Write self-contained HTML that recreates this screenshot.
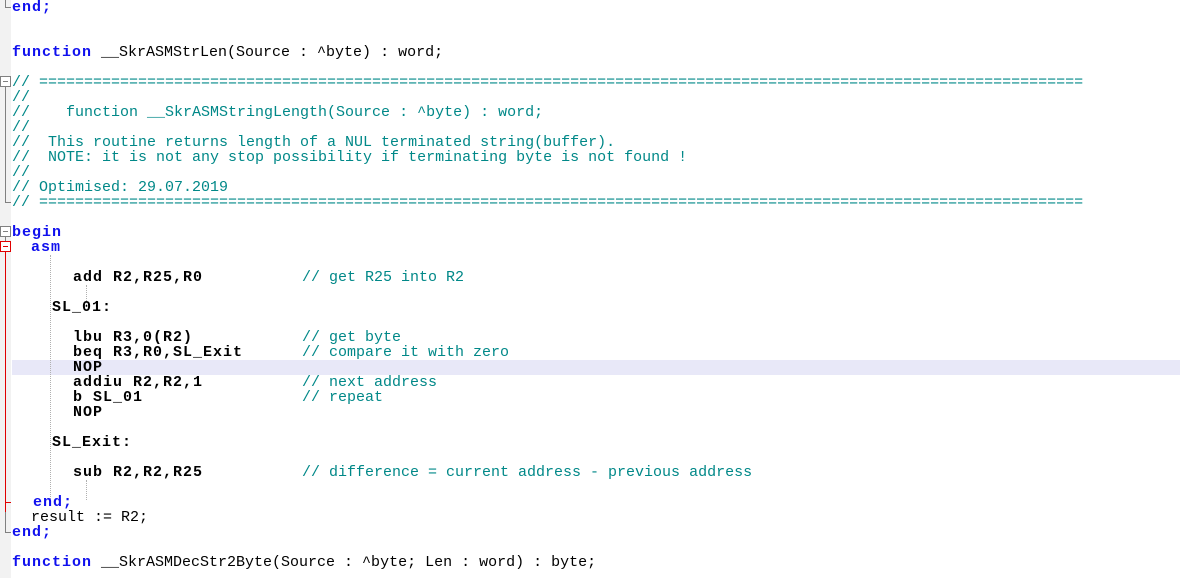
<!DOCTYPE html>
<html><head><meta charset="utf-8"><style>
html,body{margin:0;padding:0;background:#fff;width:1180px;height:578px;overflow:hidden;position:relative}
.gut{position:absolute;left:0;top:0;width:11px;height:578px;background:#f2f2f2}
.l{position:absolute;height:15px;line-height:15px;font-family:"Liberation Mono",monospace;font-size:15px;white-space:pre;color:#000}
.k{color:#1010ee;font-weight:bold;letter-spacing:1px}
.b{font-weight:bold;letter-spacing:1px}
.c{color:#008888}
.hl{position:absolute;left:12px;top:360px;width:1168px;height:15px;background:#e8e8f8}
.v{position:absolute;width:1px}
.h{position:absolute;height:1px}
.box{position:absolute;left:0px;width:9px;height:9px;border:1px solid #808080;background:#fff;z-index:3}
.box:after{content:"";position:absolute;left:2px;top:4px;width:5px;height:1px;background:#808080}
.box.r{border-color:#e00000}
.box.r:after{background:#e00000}
.dot{position:absolute;width:0;border-left:1px dotted #b0b0b0}
</style></head><body>
<div class="gut"></div>
<div class="hl"></div>
<div class="v" style="left:5px;top:0;height:7px;background:#808080"></div>
<div class="h" style="left:5px;top:7px;width:6px;background:#808080"></div>
<div class="box" style="top:76px"></div>
<div class="v" style="left:5px;top:87px;height:115px;background:#808080"></div>
<div class="h" style="left:5px;top:202px;width:6px;background:#808080"></div>
<div class="box" style="top:226px"></div>
<div class="v" style="left:5px;top:237px;height:296px;background:#808080"></div>
<div class="h" style="left:5px;top:532px;width:6px;background:#808080"></div>
<div class="box r" style="top:241px"></div>
<div class="v" style="left:5px;top:252px;height:260px;background:#e00000;z-index:2"></div>
<div class="h" style="left:5px;top:502px;width:6px;background:#e00000;z-index:2"></div>
<div class="dot" style="left:50px;top:255px;height:250px"></div>
<div class="dot" style="left:86px;top:285px;height:20px"></div>
<div class="dot" style="left:86px;top:480px;height:20px"></div>

<div class="l" style="left:12px;top:0"><span class="k">end;</span></div>
<div class="l" style="left:12px;top:45px"><span class="k">function</span> __SkrASMStrLen(Source : ^byte) : word;</div>
<div class="l c" style="left:12px;top:75px">// ====================================================================================================================</div>
<div class="l c" style="left:12px;top:90px">//</div>
<div class="l c" style="left:12px;top:105px">//    function __SkrASMStringLength(Source : ^byte) : word;</div>
<div class="l c" style="left:12px;top:120px">//</div>
<div class="l c" style="left:12px;top:135px">//  This routine returns length of a NUL terminated string(buffer).</div>
<div class="l c" style="left:12px;top:150px">//  NOTE: it is not any stop possibility if terminating byte is not found !</div>
<div class="l c" style="left:12px;top:165px">//</div>
<div class="l c" style="left:12px;top:180px">// Optimised: 29.07.2019</div>
<div class="l c" style="left:12px;top:195px">// ====================================================================================================================</div>
<div class="l" style="left:12px;top:225px"><span class="k">begin</span></div>
<div class="l" style="left:31px;top:240px"><span class="k">asm</span></div>
<div class="l b" style="left:73px;top:270px">add R2,R25,R0</div>
<div class="l c" style="left:302px;top:270px">// get R25 into R2</div>
<div class="l b" style="left:52px;top:300px">SL_01:</div>
<div class="l b" style="left:73px;top:330px">lbu R3,0(R2)</div>
<div class="l c" style="left:302px;top:330px">// get byte</div>
<div class="l b" style="left:73px;top:345px">beq R3,R0,SL_Exit</div>
<div class="l c" style="left:302px;top:345px">// compare it with zero</div>
<div class="l b" style="left:73px;top:360px">NOP</div>
<div class="l b" style="left:73px;top:375px">addiu R2,R2,1</div>
<div class="l c" style="left:302px;top:375px">// next address</div>
<div class="l b" style="left:73px;top:390px">b SL_01</div>
<div class="l c" style="left:302px;top:390px">// repeat</div>
<div class="l b" style="left:73px;top:405px">NOP</div>
<div class="l b" style="left:52px;top:435px">SL_Exit:</div>
<div class="l b" style="left:73px;top:465px">sub R2,R2,R25</div>
<div class="l c" style="left:302px;top:465px">// difference = current address - previous address</div>
<div class="l" style="left:33px;top:495px"><span class="k">end;</span></div>
<div class="l" style="left:31px;top:510px">result := R2;</div>
<div class="l" style="left:12px;top:525px"><span class="k">end;</span></div>
<div class="l" style="left:12px;top:555px"><span class="k">function</span> __SkrASMDecStr2Byte(Source : ^byte; Len : word) : byte;</div>
</body></html>
